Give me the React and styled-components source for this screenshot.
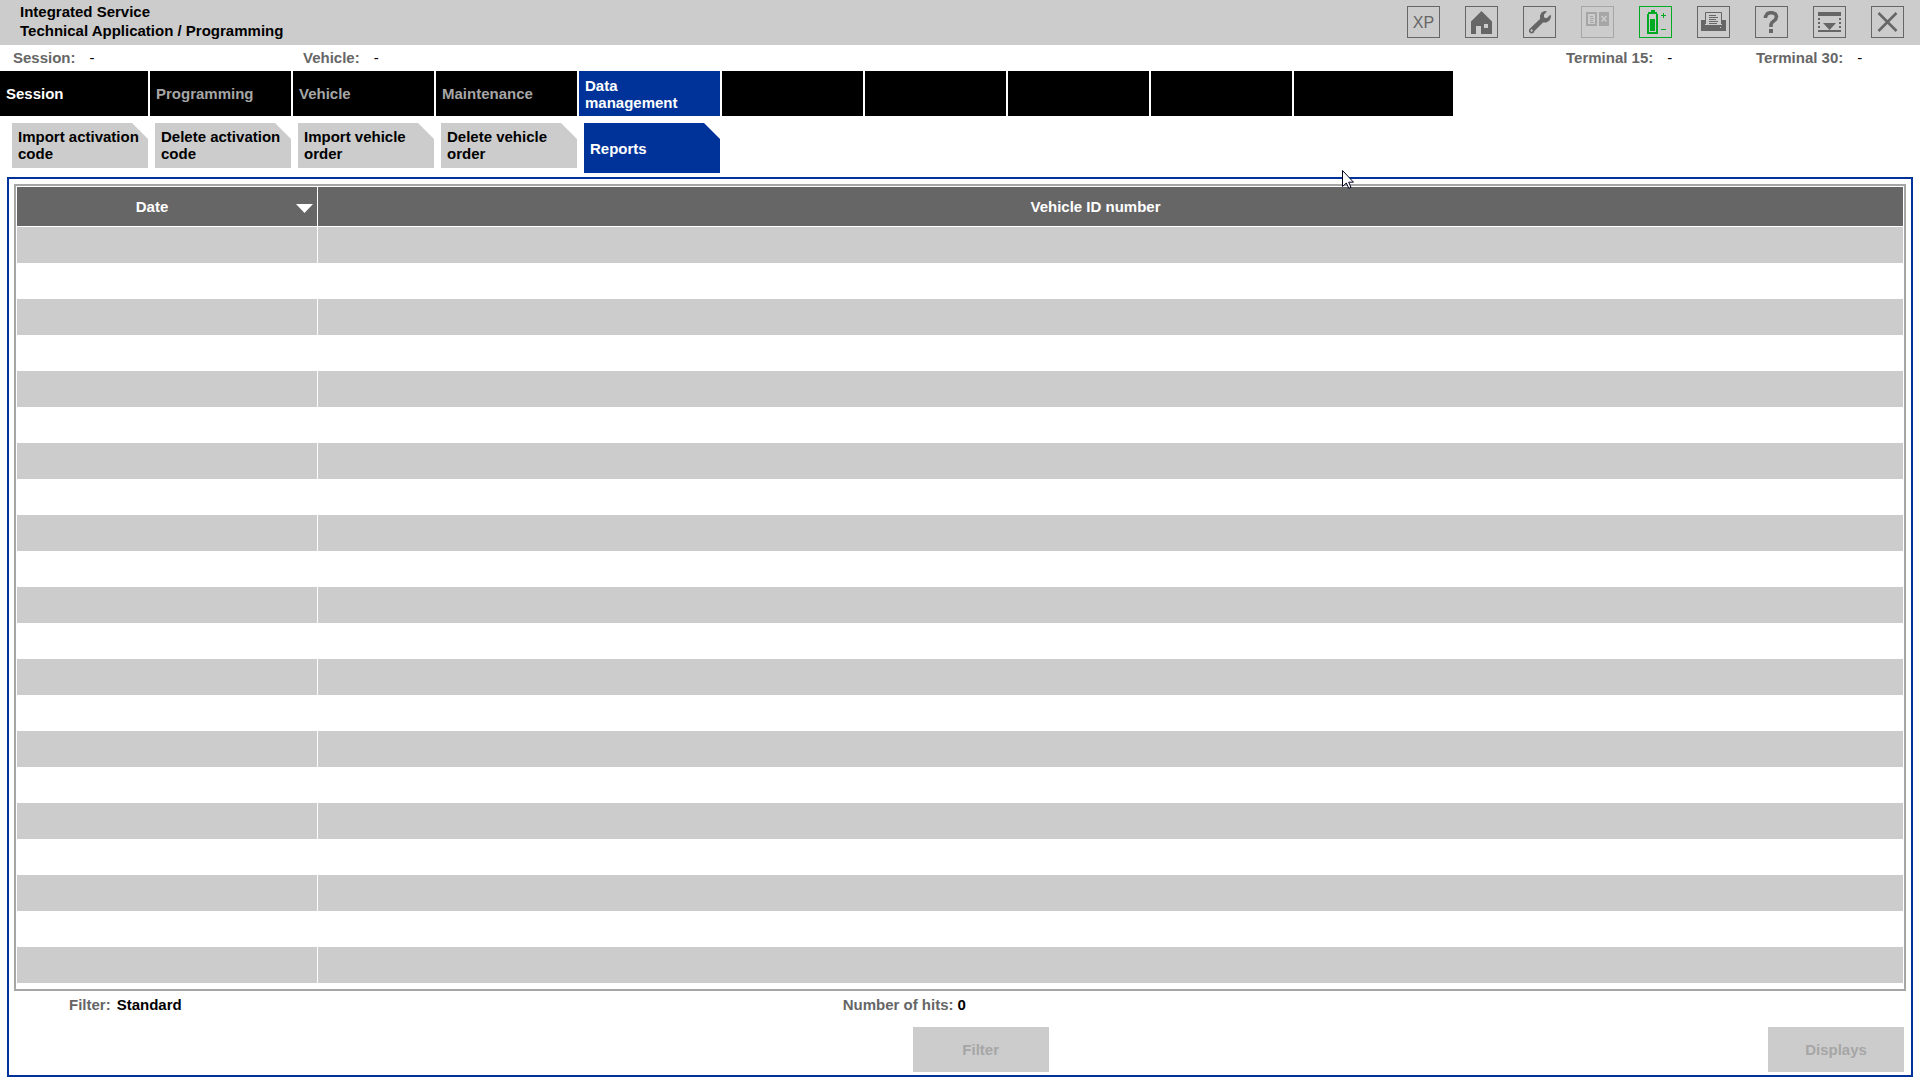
import React from "react"
import styled, { createGlobalStyle, css } from "styled-components"

const BLUE = "#003399"
const LIGHT = "#cccccc"
const MID = "#a6a6a6"
const DARK = "#666666"
const GREEN = "#00aa22"

const GlobalStyle = createGlobalStyle`
  *,
  *::before,
  *::after {
    box-sizing: border-box;
  }

  body {
    margin: 0;
    background: #fff;
  }

  body,
  button {
    font: bold 15px/17px "Liberation Sans", Arial, sans-serif;
  }

  button {
    margin: 0;
    padding: 0;
    border: 0;
    border-radius: 0;
    color: inherit;
    text-align: left;
  }
`

const Root = styled.div`
  display: flex;
  flex-direction: column;
  min-height: 100vh;
`

const Header = styled.header`
  display: flex;
  justify-content: space-between;
  height: 45px;
  padding: 0 16px 0 20px;
  background: ${LIGHT};
`

const Title = styled.h1`
  margin: 0;
  padding-top: 2px;
  font-size: 15px;
  line-height: 19px;
`

const Tools = styled.div`
  display: flex;
  gap: 25px;
  padding-top: 6px;
`

const ToolButton = styled.button`
  display: flex;
  align-items: center;
  justify-content: center;
  width: 33px;
  height: 32px;
  border: 1px solid currentColor;
  background: transparent;
  color: ${props => props.$color || DARK};
  font-size: 16px;
  font-weight: normal;

  > svg {
    display: block;
    flex: none;
  }
`

const StatusBar = styled.div`
  display: flex;
  justify-content: space-between;
  align-items: center;
  height: 26px;
  padding: 0 0 2px 13px;
`

const StatusGroup = styled.div`
  display: grid;
  grid-template-columns: ${props => props.$columns};
`

const Status = styled.div`
  display: flex;
  gap: 14px;
`

const Label = styled.span`
  color: ${DARK};
`

const StatusValue = styled.span`
  font-weight: normal;
`

const Tabs = styled.nav`
  display: flex;
  gap: 2px;
  height: 45px;
`

const tabBox = css`
  width: ${props => props.$width || 141}px;
  background: ${props => (props.$active ? BLUE : "#000")};
`

const Tab = styled.button`
  ${tabBox}
  padding: 0 6px;
  color: ${props => (props.$dim ? MID : "#fff")};
`

const EmptyTab = styled.div`
  ${tabBox}
`

const SubTabs = styled.nav`
  display: flex;
  align-items: flex-start;
  gap: 7px;
  height: 57px;
  padding: 7px 12px 0;
`

const SubTab = styled.button`
  width: 136px;
  height: ${props => (props.$active ? 50 : 45)}px;
  padding: ${props => (props.$active ? "0 6px" : "0 6px 2px")};
  background: ${props => (props.$active ? BLUE : LIGHT)};
  color: ${props => (props.$active ? "#fff" : "#000")};
  clip-path: polygon(0 0, calc(100% - 16px) 0, 100% 16px, 100% 100%, 0 100%);
`

const Panel = styled.main`
  display: flex;
  flex: 1;
  flex-direction: column;
  margin: 4px 7px 3px;
  padding: 5px 5px 3px;
  border: 2px solid ${BLUE};
`

const TableFrame = styled.div`
  padding: 1px 1px 6px;
  border: 2px solid ${MID};
`

const Table = styled.table`
  width: 100%;
  table-layout: fixed;
  border-spacing: 0;

  th,
  td {
    padding: 0;
  }

  th:first-child,
  td:first-child {
    width: 301px;
    border-right: 1px solid #fff;
  }

  th {
    height: 40px;
    border-bottom: 1px solid #fff;
    background: ${DARK};
    color: #fff;
  }

  td {
    height: 36px;
  }

  tbody tr:nth-child(odd) {
    background: ${LIGHT};
  }
`

const SortButton = styled.button`
  display: flex;
  align-items: center;
  width: 100%;
  padding-right: 4px;
  background: transparent;
  text-align: center;

  > span {
    flex: 1;
    padding-right: 9px;
  }
`

const SortArrow = styled.i`
  width: 17px;
  height: 9px;
  margin-top: 4px;
  background: #fff;
  clip-path: polygon(0 0, 100% 0, 50% 100%);
  visibility: ${props => (props.$shown ? "visible" : "hidden")};
`

const Summary = styled.div`
  display: flex;
  padding: 5px 0;
`

const SummaryItem = styled.div`
  display: flex;
  gap: ${props => props.$gap}px;
  width: ${props => props.$width};
  padding-left: ${props => props.$indent || 0}px;
`

const Actions = styled.div`
  display: flex;
  justify-content: space-between;
  margin-top: auto;
  padding: 0 2px 0 47.5%;
`

const ActionButton = styled.button`
  width: 136px;
  height: 45px;
  background: ${LIGHT};
  color: ${MID};
  text-align: center;
`

const Pointer = styled.svg`
  position: absolute;
  top: 170px;
  left: 1342px;
  pointer-events: none;
`

const Icon = ({ children }) => (
  <svg width='31' height='30' viewBox='1 1 31 30' fill='currentColor' aria-hidden='true'>
    {children}
  </svg>
)

const HomeIcon = () => (
  <Icon>
    <path
      fillRule='evenodd'
      d='M16.500 5L27 15.500V28H16V20H11V28H6V15.500ZM19 18V22H23V18Z'
    />
  </Icon>
)

const WrenchIcon = () => (
  <Icon>
    <path
      fillRule='evenodd'
      d='M24 5.500L21 8.500V11L22 12H24L27.500 8.500L28 11L26.500 14.500L23.500 16.500H20L11.500 25L10.500 27L8 27.500L6 26V23.500L8 21.500L17 13V9.500L18.500 6.500L21.500 5ZM8.500 23L7.300 24.500L8.500 26L10 24.500Z'
    />
  </Icon>
)

const ManualIcon = () => (
  <Icon>
    <path d='M5 6H16V20H5ZM18 6H28V20H18Z' />
    <path d='M7 8H14V18H7Z' fill={LIGHT} />
    <path d='M9 10.500H12M9 12.500H13M9 14.500H12M9 16.500H13' stroke='currentColor' />
    <path d='M20.500 10L25.500 15.500M25.500 10L20.500 15.500' stroke={LIGHT} strokeWidth='1.500' />
  </Icon>
)

const BatteryIcon = () => (
  <Icon>
    <path fillRule='evenodd' d='M12 4H16V6H18V8H19V28H8V8H9V6H12ZM10 8V26H17V8Z' />
    <path d='M11 13H16V25H11ZM22 9H24V7H25V9H27V10H25V12H24V10H22ZM22 23H27V24H22Z' />
  </Icon>
)

const PrinterIcon = () => (
  <Icon>
    <path d='M4 14H8V19H25V14H29V25H4Z' />
    <path d='M8.500 18V6.500H24.500V18' fill='none' stroke='currentColor' />
    <path d='M12 9.500H19M12 11.500H21M12 13.500H19M12 15.500H21M12 17.500H20' stroke='currentColor' />
    <path d='M23 21H24V22H23Z' fill={LIGHT} />
  </Icon>
)

const HelpIcon = () => (
  <Icon>
    <path
      d='M10.500 12V10.500L12.500 7.500L15 6.800H17.500L20.500 8L21.500 10.500L20.500 13.500L17 16.500L16 18.500V21'
      fill='none'
      stroke='currentColor'
      strokeWidth='3.500'
    />
    <path d='M14 23H18V27H14Z' />
  </Icon>
)

const MinimizeIcon = () => (
  <Icon>
    <path d='M5 6H28V10H5ZM5 24H28V26H5ZM10 17H23L16.500 24Z' />
    <path d='M5 12H7V14H5ZM5 16H7V18H5ZM5 20H7V22H5ZM26 12H28V14H26ZM26 16H28V18H26ZM26 20H28V22H26Z' />
  </Icon>
)

const CloseIcon = () => (
  <Icon>
    <path d='M7.500 7L25.500 25M25.500 7L7.500 25' stroke='currentColor' strokeWidth='2.500' />
  </Icon>
)

const tools = [
  { label: "Home", icon: <HomeIcon /> },
  { label: "Settings", icon: <WrenchIcon /> },
  { label: "Manual", icon: <ManualIcon />, color: MID },
  { label: "Battery", icon: <BatteryIcon />, color: GREEN },
  { label: "Print", icon: <PrinterIcon /> },
  { label: "Help", icon: <HelpIcon /> },
  { label: "Minimize", icon: <MinimizeIcon /> },
  { label: "Close", icon: <CloseIcon /> }
]

const emptyTabs = [141, 141, 141, 141, 159]

const subTabs = [
  "Import activation code",
  "Delete activation code",
  "Import vehicle order",
  "Delete vehicle order",
  "Reports"
]

const rows = Array.from({ length: 21 }, (_, i) => i)

export default () => (
  <Root>
    <GlobalStyle />
    <Header>
      <Title>
        Integrated Service
        <br />
        Technical Application / Programming
      </Title>
      <Tools>
        <ToolButton>XP</ToolButton>
        {tools.map(({ label, icon, color }) => (
          <ToolButton key={label} aria-label={label} $color={color}>
            {icon}
          </ToolButton>
        ))}
      </Tools>
    </Header>

    <StatusBar>
      <StatusGroup $columns='290px auto'>
        <Status>
          <Label>Session:</Label>
          <StatusValue>-</StatusValue>
        </Status>
        <Status>
          <Label>Vehicle:</Label>
          <StatusValue>-</StatusValue>
        </Status>
      </StatusGroup>
      <StatusGroup $columns='190px 164px'>
        <Status>
          <Label>Terminal 15:</Label>
          <StatusValue>-</StatusValue>
        </Status>
        <Status>
          <Label>Terminal 30:</Label>
          <StatusValue>-</StatusValue>
        </Status>
      </StatusGroup>
    </StatusBar>

    <Tabs>
      <Tab $width={148}>Session</Tab>
      <Tab $dim>Programming</Tab>
      <Tab $dim>Vehicle</Tab>
      <Tab $dim>Maintenance</Tab>
      <Tab $active>Data management</Tab>
      {emptyTabs.map((width, i) => (
        <EmptyTab key={i} $width={width} />
      ))}
    </Tabs>

    <SubTabs>
      {subTabs.map(name => (
        <SubTab key={name} $active={name === "Reports"}>
          {name}
        </SubTab>
      ))}
    </SubTabs>

    <Panel>
      <TableFrame>
        <Table>
          <thead>
            <tr>
              <th>
                <SortButton>
                  <span>Date</span>
                  <SortArrow $shown />
                </SortButton>
              </th>
              <th>
                <SortButton>
                  <span>Vehicle ID number</span>
                  <SortArrow />
                </SortButton>
              </th>
            </tr>
          </thead>
          <tbody>
            {rows.map(row => (
              <tr key={row}>
                <td />
                <td />
              </tr>
            ))}
          </tbody>
        </Table>
      </TableFrame>
      <Summary>
        <SummaryItem $gap={6} $width='43.8%' $indent={55}>
          <Label>Filter:</Label>
          <span>Standard</span>
        </SummaryItem>
        <SummaryItem $gap={4}>
          <Label>Number of hits:</Label>
          <span>0</span>
        </SummaryItem>
      </Summary>
      <Actions>
        <ActionButton disabled>Filter</ActionButton>
        <ActionButton disabled>Displays</ActionButton>
      </Actions>
    </Panel>

    <Pointer width='12' height='19' viewBox='0 0 12 19' aria-hidden='true'>
      <path
        d='M0.500 0.500V16.500L4.300 13L6.800 18.300L9 17.300L6.700 12.200H11.500Z'
        fill='#fff'
        stroke='#000022'
      />
    </Pointer>
  </Root>
)
